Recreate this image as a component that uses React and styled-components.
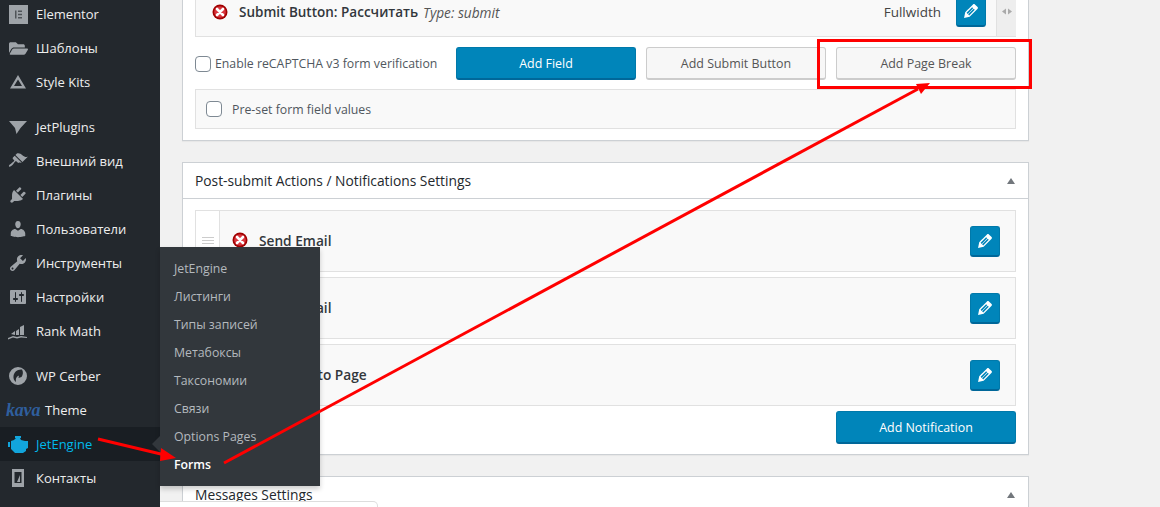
import React from "react";
import styled, { createGlobalStyle } from "styled-components";
import { FaFolderOpen } from "react-icons/fa";

const Global = createGlobalStyle`
  html, body { margin: 0; padding: 0; height: 507px; overflow: hidden; background: #f1f1f1; }
  * { box-sizing: border-box; }
`;

const Page = styled.div`
  position: relative;
  display: flex;
  width: 1160px;
  height: 507px;
  overflow: hidden;
  font-family: "Open Sans", "Liberation Sans", sans-serif;
  font-size: 13px;
  color: #444;
`;

const Sidebar = styled.nav`
  flex: 0 0 160px;
  width: 160px;
  height: 507px;
  background: #23282d;
  display: flex;
  flex-direction: column;
  position: relative;
  z-index: 2;
`;
const MenuGroup = styled.div`
  display: flex;
  flex-direction: column;
  margin-top: ${(p) => p.$top || 0}px;
`;
const MenuItem = styled.div`
  height: 34px;
  display: flex;
  align-items: center;
  font-size: 13px;
  color: ${(p) => (p.$active ? "#00b9eb" : "#eee")};
  background: ${(p) => (p.$active ? "#191e23" : "transparent")};
  white-space: nowrap;
`;
const IconSlot = styled.span`
  flex: 0 0 36px;
  width: 36px;
  height: 34px;
  display: flex;
  align-items: center;
  justify-content: center;
  color: ${(p) => (p.$active ? "#12a5dc" : "#9ea3a8")};
`;
const KavaMark = styled.span`
  flex: 0 0 45px;
  padding-left: 6px;
  font-family: "Liberation Serif", serif;
  font-style: italic;
  font-weight: 700;
  font-size: 18px;
  letter-spacing: -0.2px;
  color: #2f5f9e;
`;

const Flyout = styled.div`
  position: absolute;
  left: 160px;
  top: 247px;
  width: 160px;
  height: 239px;
  padding: 8px 0 0;
  background: #32373c;
  box-shadow: 0 3px 5px rgba(0, 0, 0, 0.2);
  z-index: 3;
  &::before {
    content: "";
    position: absolute;
    left: -8px;
    top: 189px;
    border: 8px solid transparent;
    border-left: 0;
    border-right-color: #32373c;
  }
`;
const FlyoutItem = styled.div`
  height: 28px;
  line-height: 28px;
  padding-left: 14px;
  font-size: 12.3px;
  color: ${(p) => (p.$current ? "#fff" : "#b4b9be")};
  font-weight: ${(p) => (p.$current ? 600 : 400)};
`;

const Main = styled.main`
  flex: 1;
  padding-left: 22px;
  display: flex;
  flex-direction: column;
  gap: 21px;
  min-width: 0;
`;
const Panel = styled.section`
  width: 847px;
  flex: none;
  height: ${(p) => p.$h}px;
  background: #fff;
  border: 1px solid #ccd0d4;
  border-top-width: ${(p) => (p.$cut ? 0 : 1)}px;
  box-shadow: 0 1px 1px rgba(0, 0, 0, 0.04);
`;
const PanelHeader = styled.header`
  height: 36px;
  padding: 0 12px;
  display: flex;
  align-items: center;
  justify-content: space-between;
  border-bottom: 1px solid #ccd0d4;
  font-size: 13.8px;
  font-weight: 500;
  color: #23282d;
`;
const Caret = styled.span`
  width: 0;
  height: 0;
  margin-right: 1px;
  border: 4.5px solid transparent;
  border-top: 0;
  border-bottom: 6px solid #72777c;
`;
const PanelBody = styled.div`
  padding: ${(p) => p.$pad || "0"};
  display: flex;
  flex-direction: column;
`;

const FieldRow = styled.div`
  height: 37px;
  display: flex;
  background: #f9f9f9;
  border: 1px solid #e1e1e1;
  border-top: 0;
`;
const FieldMain = styled.div`
  flex: 1;
  display: flex;
  align-items: center;
  padding: 0 10px 12px 16px;
  height: 36px;
`;
const Strong = styled.strong`
  font-weight: 600;
  color: #32373c;
  font-size: 13.5px;
`;
const FieldName = styled(Strong)`
  margin: 0 5px 0 11px;
`;
const TypeNote = styled.em`
  color: #555;
  font-size: 13.7px;
`;
const Width = styled.span`
  margin-left: auto;
  margin-right: 15px;
  font-size: 13.5px;
  color: #444;
`;
const SideHandle = styled.div`
  flex: 0 0 20px;
  margin-right: -1px;
  background: #eee;
  border-left: 1px solid #e1e1e1;
  display: flex;
  justify-content: center;
  padding-top: 7px;
  color: #aaa;
`;
const EditButton = styled.button`
  flex: none;
  width: 30px;
  height: 31px;
  padding: 0;
  display: flex;
  align-items: center;
  justify-content: center;
  background: #0085ba;
  border: 1px solid #0079aa;
  border-bottom: 2px solid #006799;
  border-radius: 3px;
  color: #fff;
  margin-top: ${(p) => p.$mt || 0}px;
`;

const Controls = styled.div`
  display: flex;
  align-items: center;
  gap: 10px;
  margin-top: 10px;
  height: 33px;
`;
const Check = styled.span`
  flex: none;
  display: block;
  width: 16px;
  height: 16px;
  background: #fff;
  border: 1px solid #7e8993;
  border-radius: 4px;
`;
const CheckLabel = styled.label`
  display: flex;
  align-items: center;
  gap: ${(p) => p.$gap}px;
  color: #50575e;
  font-size: 12.3px;
  white-space: nowrap;
`;
const RecaptchaLabel = styled(CheckLabel)`
  width: 251px;
`;
const Btn = styled.button`
  flex: none;
  width: 180px;
  height: 33px;
  font-family: inherit;
  font-size: 12.45px;
  border-radius: 3px;
  padding: 1px 0 0;
  background: ${(p) => (p.$primary ? "#0085ba" : "#f7f7f7")};
  color: ${(p) => (p.$primary ? "#fff" : "#555")};
  border: 1px solid ${(p) => (p.$primary ? "#0079aa" : "#ccc")};
  border-bottom: 2px solid ${(p) => (p.$primary ? "#006799" : "#ccc")};
`;
const PresetBox = styled.div`
  margin-top: 9px;
  height: 40px;
  display: flex;
  align-items: center;
  padding-left: 10px;
  background: #f9f9f9;
  border: 1px solid #e1e1e1;
`;

const NotifyList = styled.div`
  display: flex;
  flex-direction: column;
  gap: 5px;
`;
const NotifyRow = styled.div`
  height: 62px;
  display: flex;
  align-items: stretch;
  background: #f9f9f9;
  border: 1px solid #e1e1e1;
`;
const Drag = styled.div`
  flex: 0 0 24px;
  border-right: 1px solid #e1e1e1;
  display: flex;
  flex-direction: column;
  align-items: center;
  gap: 2px;
  padding-top: 26px;
  background: #fff;
  & > i {
    display: block;
    width: 12px;
    height: 1px;
    background: #ccc;
  }
`;
const NotifyMain = styled.div`
  flex: 1;
  display: flex;
  align-items: flex-start;
  justify-content: space-between;
  padding: 20px 15px 0 12px;
`;
const NotifyTitle = styled.div`
  display: flex;
  align-items: center;
  gap: 11px;
  height: 18px;
`;
const NotifyName = styled(Strong)`
  font-size: 13.7px;
`;
const NotifyEdit = styled(EditButton)`
  margin-top: -5px;
`;
const RightAction = styled.div`
  margin-top: 5px;
  display: flex;
  justify-content: flex-end;
`;
const Overlay = styled.svg`
  position: absolute;
  left: 0;
  top: 0;
  z-index: 5;
  pointer-events: none;
`;
const Tip = styled.div`
  position: absolute;
  left: 160px;
  top: 501px;
  width: 218px;
  height: 10px;
  background: #fff;
  border: 1px solid #ddd;
  border-left: 0;
  border-radius: 0 5px 0 0;
  z-index: 2;
`;
const ErrorSvg = styled.svg`
  flex: none;
  display: block;
`;

const Dash = ({ d, size = 20 }) => (
  <svg width={size} height={size} viewBox="0 0 20 20" fill="currentColor" aria-hidden="true">
    <path d={d} fillRule="evenodd" />
  </svg>
);
const Custom = ({ children, w = 20, h = 20, vb = "0 0 20 20" }) => (
  <svg width={w} height={h} viewBox={vb} fill="currentColor" aria-hidden="true">
    {children}
  </svg>
);

const brush = "M14.48 11.06L7.41 3.99l1.5-1.5c.5-.56 2.3-.47 3.51.32 1.21.8 1.43 1.28 2.91 2.1 1.18.64 2.45 1.26 4.45.85zm-.71.71L6.7 4.7 4.93 6.47c-.39.39-.39 1.02 0 1.41l1.06 1.06c.39.39.39 1.03 0 1.42-.6.6-1.43 1.11-2.21 1.69-.35.26-.7.53-1.01.84C1.43 13.23.4 14.75 1.1 15.45c.7.7 2.21-.33 3.55-1.67.31-.31.58-.66.84-1.01.58-.78 1.09-1.61 1.69-2.21.39-.39 1.02-.39 1.41 0l1.06 1.06c.39.39 1.02.39 1.41 0z";
const plug = "M13.11 4.36L9.87 7.6 8 5.73l3.24-3.24c.35-.34 1.05-.2 1.56.32.52.51.66 1.21.31 1.55zm-8 1.77l.91-1.12 9.01 9.01-1.19.84c-.71.71-2.63 1.16-3.82 1.16H6.14L4.9 17.26c-.59.59-1.54.59-2.12 0-.59-.58-.59-1.53 0-2.12l1.24-1.24v-3.88c0-1.13.4-3.19 1.09-3.89zm7.26 3.97l3.24-3.24c.34-.35 1.04-.21 1.55.31.52.51.66 1.21.31 1.55l-3.24 3.25z";
const user = "M10 9.25c-2.27 0-2.73-3.44-2.73-3.44C7 4.02 7.82 2 9.97 2c2.16 0 2.98 2.02 2.71 3.81 0 0-.41 3.44-2.68 3.44zm0 2.57L12.72 10c2.39 0 4.52 2.33 4.52 4.53v2.49s-3.65 1.13-7.24 1.13c-3.65 0-7.24-1.13-7.24-1.13v-2.49c0-2.25 1.94-4.48 4.47-4.48z";
const wrench = "M16.68 9.77c-1.34 1.34-3.3 1.67-4.95.99l-5.41 6.52c-.99.99-2.59.99-3.58 0s-.99-2.59 0-3.57l6.52-5.42c-.68-1.65-.35-3.61.99-4.95 1.28-1.28 3.12-1.62 4.72-1.06l-2.89 2.89 2.82 2.82 2.86-2.87c.53 1.58.18 3.39-1.08 4.65zM3.81 16.21c.4.39 1.04.39 1.43 0 .4-.4.4-1.04 0-1.43-.39-.4-1.03-.4-1.43 0-.39.39-.39 1.03 0 1.43z";
const sliders = "M18 16V4c0-.55-.45-1-1-1H3c-.55 0-1 .45-1 1v12c0 .55.45 1 1 1h14c.55 0 1-.45 1-1zM8 11h1c.55 0 1 .45 1 1s-.45 1-1 1H8v1.5c0 .28-.22.5-.5.5s-.5-.22-.5-.5V13H6c-.55 0-1-.45-1-1s.45-1 1-1h1V5.5c0-.28.22-.5.5-.5s.5.22.5.5V11zm5-2h-1c-.55 0-1-.45-1-1s.45-1 1-1h1V5.5c0-.28.22-.5.5-.5s.5.22.5.5V7h1c.55 0 1 .45 1 1s-.45 1-1 1h-1v5.5c0 .28-.22.5-.5.5s-.5-.22-.5-.5V9z";
const pencil = "M13.89 3.39l2.71 2.72c.46.46.42 1.24.03 1.64l-8.01 8.02-5.56 1.16 1.16-5.58s7.6-7.63 7.99-8.03c.39-.39 1.22-.39 1.68.07zm-2.73 2.79l-5.59 5.61 1.11 1.11 5.54-5.65zm-2.97 8.23l5.58-5.6-1.07-1.08-5.59 5.6z";

const ErrorIcon = () => (
  <ErrorSvg width="16" height="16" viewBox="0 0 16 16" aria-hidden="true">
    <circle cx="8" cy="8" r="7.5" fill="#a00000" />
    <circle cx="8" cy="8" r="5.8" fill="#d9363e" />
    <path d="M5 5l6 6M11 5l-6 6" stroke="#fff" strokeWidth="2.6" strokeLinecap="round" />
  </ErrorSvg>
);
const Pencil = () => <Dash d={pencil} size={20} />;

const top = [
  { label: "Elementor", icon: (
    <Custom w={19} h={19} vb="0 0 19 19">
      <path d="M0 0h19v19H0z" />
      <path fill="#4f5458" d="M6 5.500h1.500v8H6zM9 5.500h4V7H9zM9 8.750h4v1.500H9zM9 12h4v1.500H9z" />
    </Custom>) },
  { label: "Шаблоны", icon: <FaFolderOpen size={19} /> },
  { label: "Style Kits", icon: (
    <Custom><path fillRule="evenodd" d="M10 3L18 16.500H2zM10 7.500l-4 6.500h8z" /></Custom>) },
];
const mid = [
  { label: "JetPlugins", icon: <Custom><path d="M1 4h18l-6.500 7-4 6-1.500-6z" /></Custom> },
  { label: "Внешний вид", icon: <Dash d={brush} /> },
  { label: "Плагины", icon: <Dash d={plug} /> },
  { label: "Пользователи", icon: <Dash d={user} /> },
  { label: "Инструменты", icon: <Dash d={wrench} /> },
  { label: "Настройки", icon: <Dash d={sliders} /> },
  { label: "Rank Math", icon: (
    <Custom>
      <path d="M3 13l4-3v4zM8 10l3-2v6H8zM12 6l4-2v10h-4z" />
      <path d="M0 17l5-2 4 1 4-1 6 1v1l-6-.6-4 1-4-1-5 2z" />
    </Custom>) },
];

const submenu = ["JetEngine", "Листинги", "Типы записей", "Метабоксы", "Таксономии", "Связи", "Options Pages"];
const notifications = ["Send Email", "Send Email", "Redirect to Page"];

export default function App() {
  return (
    <Page>
      <Global />
      <Sidebar>
        <MenuGroup $top={-3}>
          {top.map((m) => (
            <MenuItem key={m.label}><IconSlot>{m.icon}</IconSlot>{m.label}</MenuItem>
          ))}
        </MenuGroup>
        <MenuGroup $top={11}>
          {mid.map((m) => (
            <MenuItem key={m.label}><IconSlot>{m.icon}</IconSlot>{m.label}</MenuItem>
          ))}
        </MenuGroup>
        <MenuGroup $top={11}>
          <MenuItem>
            <IconSlot>
              <Custom>
                <path fillRule="evenodd" d="M10 1a9 9 0 110 18 9 9 0 010-18zM14 3.600C10 3 6 6 5.500 10c-.3 2.500.5 4.500 2.500 6-.6-3 .2-5.500 3-6.500l-.5 2.500 3-1c1.500-2 2-5 .5-7.400z" />
              </Custom>
            </IconSlot>
            WP Cerber
          </MenuItem>
          <MenuItem><KavaMark>kava</KavaMark>Theme</MenuItem>
          <MenuItem $active>
            <IconSlot $active>
              <Custom w={20} h={17} vb="0 0 20 17">
                <path d="M0 6h2v5H0zM3 5l3-1 2-2H7V0h6v2h-1l1 2 4 1h3v7l-2 1v2l-3 2H7l-4-4z" />
              </Custom>
            </IconSlot>
            JetEngine
          </MenuItem>
          <MenuItem>
            <IconSlot>
              <Custom w={14} h={18} vb="0 0 14 18">
                <path fillRule="evenodd" d="M1 0h12v18H1zM3.500 3v11h7V3zM6 13l3-7v7z" />
              </Custom>
            </IconSlot>
            Контакты
          </MenuItem>
        </MenuGroup>
      </Sidebar>

      <Flyout>
        {submenu.map((s) => <FlyoutItem key={s}>{s}</FlyoutItem>)}
        <FlyoutItem $current>Forms</FlyoutItem>
      </Flyout>

      <Main>
        <Panel $cut $h={141}>
          <PanelBody $pad="0 12px">
            <FieldRow>
              <FieldMain>
                <ErrorIcon />
                <FieldName>Submit Button: Рассчитать</FieldName>
                <TypeNote>Type: submit</TypeNote>
                <Width>Fullwidth</Width>
                <EditButton $mt={-1}><Pencil /></EditButton>
              </FieldMain>
              <SideHandle>
                <svg width="12" height="10" viewBox="0 0 12 10" aria-hidden="true" fill="currentColor">
                  <path d="M5 1.500v6L1 4.500zM7 1.500v6l4-3z" />
                </svg>
              </SideHandle>
            </FieldRow>
            <Controls>
              <RecaptchaLabel $gap={4}><Check />Enable reCAPTCHA v3 form verification</RecaptchaLabel>
              <Btn $primary>Add Field</Btn>
              <Btn>Add Submit Button</Btn>
              <Btn>Add Page Break</Btn>
            </Controls>
            <PresetBox>
              <CheckLabel $gap={10}><Check />Pre-set form field values</CheckLabel>
            </PresetBox>
          </PanelBody>
        </Panel>

        <Panel $h={293}>
          <PanelHeader>Post-submit Actions / Notifications Settings<Caret /></PanelHeader>
          <PanelBody $pad="11px 12px 0">
            <NotifyList>
              {notifications.map((n, i) => (
                <NotifyRow key={i}>
                  <Drag><i /><i /><i /></Drag>
                  <NotifyMain>
                    <NotifyTitle>
                      <ErrorIcon />
                      <NotifyName>{n}</NotifyName>
                    </NotifyTitle>
                    <NotifyEdit><Pencil /></NotifyEdit>
                  </NotifyMain>
                </NotifyRow>
              ))}
            </NotifyList>
            <RightAction><Btn $primary>Add Notification</Btn></RightAction>
          </PanelBody>
        </Panel>

        <Panel $h={80}>
          <PanelHeader>Messages Settings<Caret /></PanelHeader>
        </Panel>
      </Main>

      <Tip />

      <Overlay width="1160" height="507" viewBox="0 0 1160 507" aria-hidden="true">
        <rect x="818.500" y="40.500" width="212" height="47" fill="none" stroke="#f00" strokeWidth="3" />
        <line x1="98" y1="439" x2="165" y2="455" stroke="#f00" strokeWidth="3" />
        <path d="M176 458L161 448L160 461z" fill="#f00" />
        <line x1="224" y1="463" x2="918" y2="89" stroke="#f00" strokeWidth="3" />
        <path d="M930 83L916 84L921 94z" fill="#f00" />
      </Overlay>
    </Page>
  );
}
